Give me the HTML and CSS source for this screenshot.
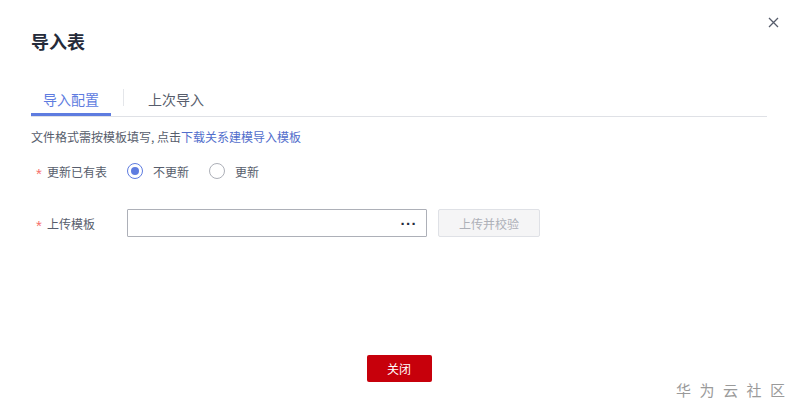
FILE: index.html
```html
<!DOCTYPE html>
<html lang="zh-CN">
<head>
    <meta charset="UTF-8">
    <meta name="viewport" content="width=device-width, initial-scale=1.0">
    <title>导入表</title>
    <link rel="stylesheet" href="styles.css">
</head>
<body>
    <div class="dialog">
        <h1 class="dialog-title">导入表</h1>
        <button class="dialog-close" aria-label="关闭">
            <svg width="11" height="11" viewBox="0 0 11 11">
                <path d="M1 1 L10 10 M10 1 L1 10" stroke="#575d6c" stroke-width="1.3" fill="none"/>
            </svg>
        </button>

        <div class="tabs">
            <div class="tab active">导入配置</div>
            <span class="tab-sep"></span>
            <div class="tab">上次导入</div>
        </div>

        <p class="desc">文件格式需按模板填写, 点击<a href="#" class="link">下载关系建模导入模板</a></p>

        <div class="form-row">
            <label class="form-label"><span class="req">*</span>更新已有表</label>
            <div class="radio-group">
                <span class="radio checked"><i class="radio-dot"></i>不更新</span>
                <span class="radio"><i class="radio-dot"></i>更新</span>
            </div>
        </div>

        <div class="form-row upload-row">
            <label class="form-label"><span class="req">*</span>上传模板</label>
            <div class="file-input"><span class="more">&middot;&middot;&middot;</span></div>
            <button class="btn-upload" disabled>上传并校验</button>
        </div>

        <div class="dialog-footer">
            <button class="btn-primary">关闭</button>
        </div>

        <div class="watermark">华为云社区</div>
    </div>
</body>
</html>
```

FILE: styles.css
```css
body {
    margin: 0;
    background-color: #fff;
    font-family: "Noto Sans CJK SC", "Liberation Sans", sans-serif;
    color: #575d6c;
}
.dialog {
    position: relative;
    box-sizing: border-box;
    height: 415px;
    padding: 28px 31px 33px;
    display: flex;
    flex-direction: column;
}
.dialog-title {
    margin: 0;
    font-size: 18px;
    line-height: 26px;
    font-weight: bold;
    color: #252b3a;
}
.dialog-close {
    position: absolute;
    top: 17px;
    right: 19px;
    padding: 0;
    border: none;
    background: none;
    width: 11px;
    height: 11px;
    line-height: 0;
}
.tabs {
    display: flex;
    align-items: flex-start;
    width: 736px;
    margin-top: 35px;
    border-bottom: 1px solid #dfe1e6;
}
.tab {
    padding: 0 12px 4px;
    font-size: 14px;
    line-height: 20px;
    color: #575d6c;
    border-bottom: 3px solid transparent;
}
.tab.active {
    color: #5e7ce0;
    border-bottom-color: #5e7ce0;
}
.tab-sep {
    width: 1px;
    height: 17px;
    margin: 0 12px;
    background-color: #e4e6ea;
}
.desc {
    margin: 11px 0 0;
    font-size: 12px;
    line-height: 18px;
}
.link {
    color: #526ecc;
    text-decoration: none;
}
.form-row {
    display: flex;
    align-items: center;
    margin-top: 13px;
    height: 24px;
}
.upload-row {
    margin-top: 26px;
    height: 28px;
}
.form-label {
    width: 96px;
    box-sizing: border-box;
    padding-left: 5px;
    font-size: 12px;
    color: #575d6c;
}
.req {
    display: inline-block;
    width: 11px;
    font-family: "Liberation Sans", sans-serif;
    font-size: 15px;
    line-height: 12px;
    vertical-align: -2px;
    color: #f66f6a;
}
.radio-group {
    display: flex;
    align-items: center;
    gap: 20px;
}
.radio {
    display: flex;
    align-items: center;
    font-size: 12px;
    color: #575d6c;
}
.radio-dot {
    box-sizing: border-box;
    width: 16px;
    height: 16px;
    border: 1px solid #adb0b8;
    border-radius: 50%;
    margin-right: 10px;
    display: flex;
    align-items: center;
    justify-content: center;
}
.radio.checked .radio-dot {
    border-color: #5e7ce0;
}
.radio.checked .radio-dot::after {
    content: "";
    width: 8px;
    height: 8px;
    border-radius: 50%;
    background-color: #5e7ce0;
}
.file-input {
    box-sizing: border-box;
    width: 300px;
    height: 28px;
    border: 1px solid #adb0b8;
    border-radius: 1px;
    display: flex;
    align-items: center;
    justify-content: flex-end;
    padding-right: 9px;
}
.more {
    font-family: "Liberation Sans", sans-serif;
    font-size: 15px;
    font-weight: bold;
    letter-spacing: 0.5px;
    color: #252b3a;
}
.btn-upload {
    box-sizing: border-box;
    width: 102px;
    height: 28px;
    margin-left: 11px;
    border: 1px solid #dfe1e6;
    border-radius: 2px;
    background-color: #f5f5f6;
    color: #adb0b8;
    font-family: inherit;
    font-size: 12px;
}
.dialog-footer {
    margin-top: auto;
    display: flex;
    justify-content: center;
}
.btn-primary {
    width: 65px;
    height: 27px;
    border: none;
    border-radius: 2px;
    background-color: #c7000b;
    color: #fff;
    font-family: inherit;
    font-size: 12px;
    padding: 0;
}
.watermark {
    position: absolute;
    left: 676px;
    top: 379px;
    font-size: 15px;
    letter-spacing: 8.5px;
    color: #9a9a9a;
}
```
